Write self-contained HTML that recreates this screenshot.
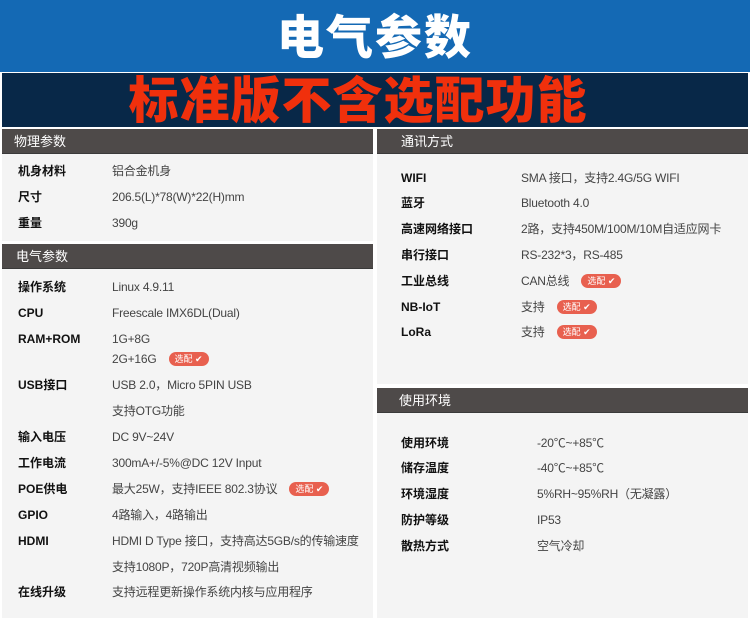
<!DOCTYPE html>
<html><head><meta charset="utf-8"><style>
*{margin:0;padding:0;box-sizing:border-box}
body{width:750px;height:620px;background:#fff;position:relative;overflow:hidden;font-family:"Liberation Sans","Noto Sans CJK SC",sans-serif;}
.abs{position:absolute}
.top{left:0;top:0;width:750px;height:72px;background:#1469b4;color:#fff;font-size:47px;font-weight:900;text-align:center;line-height:76px;letter-spacing:2px}
.navy{left:2px;top:73px;width:746px;height:54px;background:#082848;color:#f0300c;font-size:50px;font-weight:900;text-align:center;line-height:56px;letter-spacing:1px;padding-right:34px}
.panel{background:#f4f4f4}
.hd{background:#4e4a49;color:#fff;font-size:13px;line-height:25px;height:25px;border-bottom:1px solid #3a3a3a}
.l{position:absolute;font-size:12px;font-weight:bold;color:#111;line-height:14px}
.v{position:absolute;font-size:12px;color:#444;line-height:14px;letter-spacing:-0.2px}
.b{display:inline-block;background:#e8604f;color:#fff;font-size:9px;border-radius:7px;height:14px;line-height:14px;padding:0 6px;margin-left:12px;vertical-align:1px;font-weight:normal;letter-spacing:0}
</style></head><body>
<div class="abs top">电气参数</div>
<div class="abs navy">标准版不含选配功能</div>

<div class="abs panel" style="left:2px;top:129px;width:371px;height:112px"></div>
<div class="abs hd" style="left:2px;top:129px;width:371px;padding-left:12px">物理参数</div>
<div class="abs panel" style="left:2px;top:244px;width:371px;height:374px"></div>
<div class="abs hd" style="left:2px;top:244px;width:371px;padding-left:14px">电气参数</div>

<div class="abs panel" style="left:377px;top:129px;width:371px;height:255px"></div>
<div class="abs hd" style="left:377px;top:129px;width:371px;padding-left:24px">通讯方式</div>
<div class="abs panel" style="left:377px;top:388px;width:371px;height:230px"></div>
<div class="abs hd" style="left:377px;top:388px;width:371px;padding-left:22px">使用环境</div>

<div class="l" style="left:18px;top:164px">机身材料</div><div class="v" style="left:112px;top:164px">铝合金机身</div>
<div class="l" style="left:18px;top:190px">尺寸</div><div class="v" style="left:112px;top:190px">206.5(L)*78(W)*22(H)mm</div>
<div class="l" style="left:18px;top:216px">重量</div><div class="v" style="left:112px;top:216px">390g</div>

<div class="l" style="left:18px;top:280px">操作系统</div><div class="v" style="left:112px;top:280px">Linux 4.9.11</div>
<div class="l" style="left:18px;top:306px">CPU</div><div class="v" style="left:112px;top:306px">Freescale IMX6DL(Dual)</div>
<div class="l" style="left:18px;top:332px">RAM+ROM</div><div class="v" style="left:112px;top:332px">1G+8G</div>
<div class="v" style="left:112px;top:352px">2G+16G<span class="b">选配 ✔</span></div>
<div class="l" style="left:18px;top:378px">USB接口</div><div class="v" style="left:112px;top:378px">USB 2.0，Micro 5PIN USB</div>
<div class="v" style="left:112px;top:404px">支持OTG功能</div>
<div class="l" style="left:18px;top:430px">输入电压</div><div class="v" style="left:112px;top:430px">DC 9V~24V</div>
<div class="l" style="left:18px;top:456px">工作电流</div><div class="v" style="left:112px;top:456px">300mA+/-5%@DC 12V Input</div>
<div class="l" style="left:18px;top:482px">POE供电</div><div class="v" style="left:112px;top:482px">最大25W，支持IEEE 802.3协议<span class="b">选配 ✔</span></div>
<div class="l" style="left:18px;top:508px">GPIO</div><div class="v" style="left:112px;top:508px">4路输入，4路输出</div>
<div class="l" style="left:18px;top:534px">HDMI</div><div class="v" style="left:112px;top:534px">HDMI D Type 接口，支持高达5GB/s的传输速度</div>
<div class="v" style="left:112px;top:560px">支持1080P，720P高清视频输出</div>
<div class="l" style="left:18px;top:585px">在线升级</div><div class="v" style="left:112px;top:585px">支持远程更新操作系统内核与应用程序</div>

<div class="l" style="left:401px;top:171px">WIFI</div><div class="v" style="left:521px;top:171px">SMA 接口，支持2.4G/5G WIFI</div>
<div class="l" style="left:401px;top:196px">蓝牙</div><div class="v" style="left:521px;top:196px">Bluetooth 4.0</div>
<div class="l" style="left:401px;top:222px">高速网络接口</div><div class="v" style="left:521px;top:222px">2路，支持450M/100M/10M自适应网卡</div>
<div class="l" style="left:401px;top:248px">串行接口</div><div class="v" style="left:521px;top:248px">RS-232*3，RS-485</div>
<div class="l" style="left:401px;top:274px">工业总线</div><div class="v" style="left:521px;top:274px">CAN总线<span class="b">选配 ✔</span></div>
<div class="l" style="left:401px;top:300px">NB-IoT</div><div class="v" style="left:521px;top:300px">支持<span class="b">选配 ✔</span></div>
<div class="l" style="left:401px;top:325px">LoRa</div><div class="v" style="left:521px;top:325px">支持<span class="b">选配 ✔</span></div>

<div class="l" style="left:401px;top:436px">使用环境</div><div class="v" style="left:537px;top:436px">-20℃~+85℃</div>
<div class="l" style="left:401px;top:461px">储存温度</div><div class="v" style="left:537px;top:461px">-40℃~+85℃</div>
<div class="l" style="left:401px;top:487px">环境湿度</div><div class="v" style="left:537px;top:487px">5%RH~95%RH（无凝露）</div>
<div class="l" style="left:401px;top:513px">防护等级</div><div class="v" style="left:537px;top:513px">IP53</div>
<div class="l" style="left:401px;top:539px">散热方式</div><div class="v" style="left:537px;top:539px">空气冷却</div>
</body></html>
